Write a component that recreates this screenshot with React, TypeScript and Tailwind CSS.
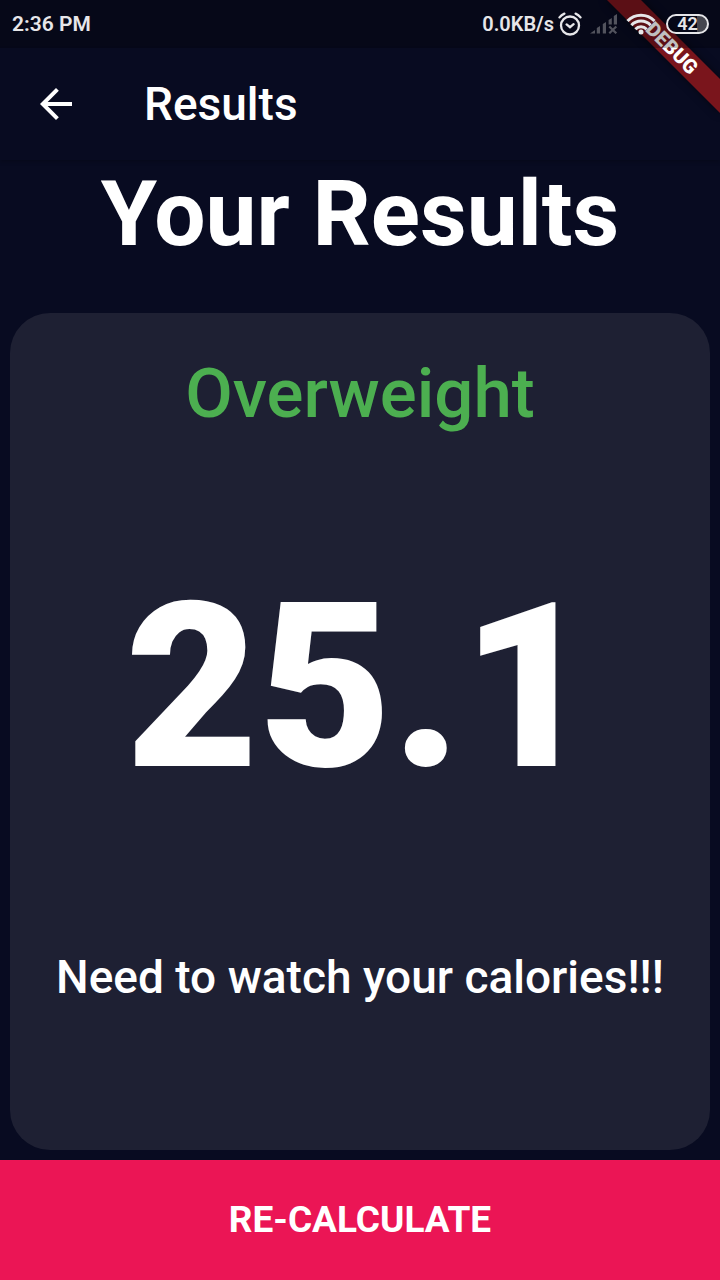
function AlarmIcon() {
  return (
    <svg width="24" height="24" viewBox="0 0 24 24" fill="none" stroke="#e6e6e9" strokeWidth="2.300" strokeLinecap="round" aria-hidden="true">
      <circle cx="12" cy="13.500" r="9" />
      <path d="M8.600 12.400l3.400 2.800 3.600-3M1.500 5.400Q3.400 2.800 6.400 1.600M22.500 5.400Q20.600 2.800 17.600 1.600" />
    </svg>
  );
}

function SignalIcon() {
  return (
    <svg width="28" height="20" viewBox="0 0 28 20" fill="#52535d" aria-hidden="true">
      <path d="M0 19.500l5-3.500v3.500zM6.800 14l3.200-2v7.500h-3.200zM12.800 10l3.200-2v11.500h-3.200zM18.600 6l3.200-2v6.500h-3.200zM23.800 2l3.200-2v10.500h-3.200z" />
      <path d="M19.300 12.500l7 6.800M26.300 12.500l-7 6.800" stroke="#52535d" strokeWidth="2.200" />
    </svg>
  );
}

function WifiIcon() {
  return (
    <svg width="30" height="22" viewBox="0 0 30 22" fill="none" stroke="#e6e6e9" strokeWidth="3" aria-hidden="true">
      <path d="M1.500 8C9 .2 21 .2 28.500 8M5.400 12.200c5.200-5.500 14-5.500 19.200 0M9.400 16.200c3-3.200 8.200-3.200 11.200 0" />
      <circle cx="15" cy="19" r="2.500" fill="#e6e6e9" stroke="none" />
    </svg>
  );
}

function StatusBar() {
  return (
    <div className="relative z-20 flex h-12 items-center justify-between bg-black/25 pr-[11px] pl-3 text-[21px] leading-6 font-semibold text-[#e6e6e9]">
      <span>2:36 PM</span>
      <div className="flex items-center text-xl leading-6">
        <span>0.0KB/s</span>
        <span className="ml-1"><AlarmIcon /></span>
        <span className="ml-2"><SignalIcon /></span>
        <span className="ml-2"><WifiIcon /></span>
        <div className="ml-2.5 flex h-5 w-[43px] items-center justify-center rounded-full border-2 border-[#e6e6e9] bg-linear-to-r from-transparent from-75% to-[#45464f] to-75% text-lg leading-none">
          42
        </div>
      </div>
    </div>
  );
}

function DebugRibbon() {
  return (
    <div className="pointer-events-none absolute top-0 right-0 z-10 size-32 overflow-hidden">
      <div className="absolute top-9 left-0 flex h-6 w-40 rotate-45 items-center justify-center bg-[#7a151c] shadow-[0_0_8px_rgba(0,0,0,0.5)]">
        <span className="text-xl leading-5 font-black text-white">DEBUG</span>
      </div>
    </div>
  );
}

export default function App() {
  return (
    <div className="relative flex min-h-screen flex-col bg-[#080b21] font-['Roboto',sans-serif] text-white">
      <StatusBar />
      <DebugRibbon />
      <header className="flex h-28 items-center px-8 shadow-[0_2px_4px_rgba(0,0,0,0.2)]">
        <button type="button" aria-label="Back" className="flex size-12 items-center justify-center">
          <svg width="48" height="48" viewBox="0 0 24 24" fill="currentColor" aria-hidden="true">
            <path d="M20 11H7.830l5.590-5.590L12 4l-8 8 8 8 1.410-1.410L7.830 13H20v-2z" />
          </svg>
        </button>
        <h1 className="ml-16 text-[46px] leading-[54px] font-medium">Results</h1>
      </header>
      <main className="flex grow flex-col">
        <h2 className="text-center text-[91px] leading-[109px] font-bold">Your Results</h2>
        <section className="mx-2.5 mt-11 mb-2.5 flex grow flex-col items-center justify-between rounded-[40px] bg-[#1e2033] pt-10 pb-[146px] text-center">
          <p className="text-[69px] leading-[81px] font-medium text-[#4caf50]">Overweight</p>
          <p className="pb-2 text-[230px] leading-[270px] font-black">25.1</p>
          <p className="text-[46px] leading-[54px] font-medium">Need to watch your calories!!!</p>
        </section>
      </main>
      <button type="button" className="h-30 w-full bg-[#eb1555] text-[37px] leading-[44px] font-bold">
        RE-CALCULATE
      </button>
    </div>
  );
}
